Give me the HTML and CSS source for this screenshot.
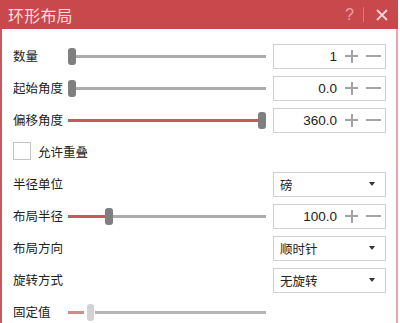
FILE: index.html
```html
<!DOCTYPE html>
<html>
<head>
<meta charset="utf-8">
<link rel="stylesheet" href="styles.css">
</head>
<body>
<div class="window">
  <div class="titlebar">
    <span class="title">环形布局</span>
    <div class="tools">
      <span class="help">?</span>
      <span class="divider"></span>
      <svg class="close" width="12" height="12" viewBox="0 0 12 12"><path d="M1 1L11 11M11 1L1 11" stroke="#f6d3d4" stroke-width="1.8" fill="none"/></svg>
    </div>
  </div>
  <div class="content">
    <div class="row">
      <span class="label">数量</span>
      <div class="slider"><span class="fill" style="width:0px"></span><span class="thumb"></span><span class="track"></span></div>
      <div class="box num"><span class="val">1</span><span class="plus"></span><span class="minus"></span></div>
    </div>
    <div class="row">
      <span class="label">起始角度</span>
      <div class="slider"><span class="fill" style="width:0px"></span><span class="thumb"></span><span class="track"></span></div>
      <div class="box num"><span class="val">0.0</span><span class="plus"></span><span class="minus"></span></div>
    </div>
    <div class="row">
      <span class="label">偏移角度</span>
      <div class="slider"><span class="fill" style="width:190px"></span><span class="thumb"></span><span class="track"></span></div>
      <div class="box num"><span class="val">360.0</span><span class="plus"></span><span class="minus"></span></div>
    </div>
    <div class="row">
      <label class="check"><span class="checkbox"></span><span>允许重叠</span></label>
    </div>
    <div class="row">
      <span class="label">半径单位</span>
      <div class="spacer"></div>
      <div class="box select"><span>磅</span><span class="arrow"></span></div>
    </div>
    <div class="row">
      <span class="label">布局半径</span>
      <div class="slider"><span class="fill" style="width:37px"></span><span class="thumb"></span><span class="track"></span></div>
      <div class="box num"><span class="val">100.0</span><span class="plus"></span><span class="minus"></span></div>
    </div>
    <div class="row">
      <span class="label">布局方向</span>
      <div class="spacer"></div>
      <div class="box select"><span>顺时针</span><span class="arrow"></span></div>
    </div>
    <div class="row">
      <span class="label">旋转方式</span>
      <div class="spacer"></div>
      <div class="box select"><span>无旋转</span><span class="arrow"></span></div>
    </div>
    <div class="row">
      <span class="label">固定值</span>
      <div class="slider disabled"><span class="fill" style="width:16px"></span><span class="thumb"></span><span class="track"></span></div>
    </div>
  </div>
</div>
</body>
</html>
```
FILE: styles.css
```css
* { box-sizing: border-box; }
html, body { margin: 0; padding: 0; background: #fff; }
body {
  width: 400px;
  height: 323px;
  overflow: hidden;
  font-family: "Noto Sans CJK SC", "Noto Sans", sans-serif;
  font-size: 12.5px;
  color: #222;
}
.window {
  width: 398px;
  height: 323px;
  border-left: 2px solid #c9575b;
  border-right: 2px solid #e2a7a9;
  background: #fff;
}
.titlebar {
  height: 29px;
  margin-left: -2px;
  margin-right: -2px;
  background: #c9484c;
  display: flex;
  align-items: center;
  justify-content: space-between;
  padding: 0 10px 0 8px;
}
.title {
  color: #f6dcdc;
  font-size: 16px;
  line-height: 1;
  letter-spacing: 0.2px;
}
.tools {
  display: flex;
  align-items: center;
  gap: 0;
}
.help {
  font-family: "Liberation Sans", sans-serif;
  font-size: 16px;
  color: #e9a0a2;
  width: 10px;
}
.divider {
  width: 1px;
  height: 15px;
  background: #d9787b;
  margin: 0 12px 0 8px;
}
.close { display: block; }
.content {
  padding: 11px 0 0 11px;
}
.row {
  height: 32px;
  display: flex;
  align-items: center;
}
.label {
  width: 55px;
  flex: none;
  line-height: 1;
}
.slider {
  width: 198px;
  height: 17px;
  display: flex;
  align-items: center;
  flex: none;
}
.fill {
  height: 3px;
  background: #c65a5f;
  flex: none;
}
.thumb {
  width: 8px;
  height: 17px;
  border-radius: 3px;
  background: #7f7f7f;
  flex: none;
}
.track {
  flex: 1;
  height: 3px;
  background: #ababab;
}
.slider.disabled .fill { background: #d48a8d; margin-right: 3px; }
.slider.disabled .thumb { background: #d2d2d2; width: 7px; }
.slider.disabled .track { background: #b5b5b5; margin-left: 1px; }
.spacer { width: 198px; flex: none; }
.box {
  margin-left: 7px;
  width: 113px;
  height: 25px;
  border: 1px solid #cfcfcf;
  display: flex;
  align-items: center;
  flex: none;
  background: #fff;
}
.num { justify-content: flex-end; padding-right: 4px; }
.val {
  font-family: "Liberation Sans", sans-serif;
  font-size: 13.5px;
  color: #222;
  margin-right: 8px;
}
.plus {
  width: 13px;
  height: 13px;
  position: relative;
  margin-right: 8px;
}
.plus::before, .plus::after {
  content: "";
  position: absolute;
  background: #a3a3a3;
}
.plus::before { left: 0; right: 0; top: 5.5px; height: 2px; }
.plus::after { top: 0; bottom: 0; left: 5.5px; width: 2px; }
.minus {
  width: 15px;
  height: 2px;
  background: #a3a3a3;
}
.select {
  justify-content: space-between;
  padding: 0 10px 0 6px;
}
.arrow {
  width: 0;
  height: 0;
  border-left: 3px solid transparent;
  border-right: 3px solid transparent;
  border-top: 4px solid #333;
}
.check {
  display: flex;
  align-items: center;
  gap: 7px;
  margin-top: -2px;
}
.checkbox {
  width: 18px;
  height: 18px;
  border: 1px solid #c4c4c4;
  background: #fff;
}
```
